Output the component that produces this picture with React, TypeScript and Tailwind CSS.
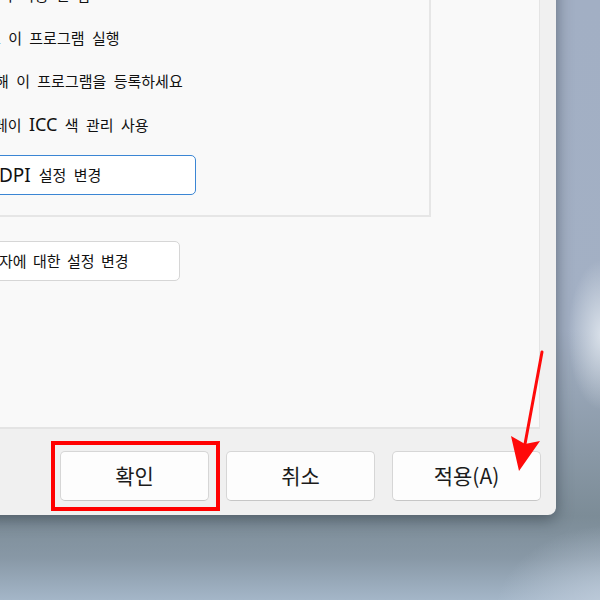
const FONT = "font-['Noto_Sans_CJK_KR','Noto_Sans',sans-serif]";

const rows = [
  { text: "적화 사용 안 함", shift: "-ml-[14px]" },
  { text: "로 이 프로그램 실행", shift: "-ml-[13px]" },
  { text: "해 이 프로그램을 등록하세요", shift: "-ml-[5px]" },
  { text: "레이 ICC 색 관리 사용", shift: "-ml-[6px]", latin: "ICC" },
];

function RowText({ text, latin }: { text: string; latin?: string }) {
  if (!latin) return <>{text}</>;
  const [a, b] = text.split(latin);
  return (
    <>
      {a}
      <span className="font-['Noto_Sans',sans-serif] text-[18px]">{latin}</span>
      {b}
    </>
  );
}

function FooterButton({ label }: { label: string }) {
  return (
    <button className="flex h-[50px] w-[149px] items-center justify-center rounded-[5px] border border-[#d6d6d6] border-b-[#c6c6c6] bg-[#fdfdfd] text-[21px] text-[#1b1b1b]">
      {label}
    </button>
  );
}

export default function App() {
  return (
    <div
      className={`relative h-[600px] w-[600px] overflow-hidden bg-[radial-gradient(ellipse_34px_75px_at_602px_335px,rgba(232,238,244,0.8),transparent),radial-gradient(ellipse_120px_90px_at_615px_615px,#c0cddc,transparent),linear-gradient(180deg,#a2afc4_0%,#a3b0c4_55%,#7c8c97_86%,#8898a6_93%,#a4b6c8_100%)] ${FONT}`}
    >
      {/* properties window, only its lower right part is in view */}
      <div className="absolute left-[-200px] top-[-60px] flex h-[575px] w-[756px] flex-col overflow-hidden rounded-lg bg-[#f0f0f0] shadow-[0_4px_16px_rgba(30,40,50,0.5)]">
        <div className="min-h-0 flex-1 pr-[16px]">
          <div className="h-full border-b-2 border-r border-[#e4e4e4] bg-[#f9f9f9] pl-[100px]">
            <div className="w-[531px] border-2 border-[#e6e6e6] pb-[20px] pl-[98px] pt-[32px] text-[15px] text-[#111] [word-spacing:4px]">
              {rows.map((r) => (
                <div key={r.text} className="flex h-[43px] items-center whitespace-nowrap">
                  <span className={r.shift}>
                    <RowText text={r.text} latin={r.latin} />
                  </span>
                </div>
              ))}
              <button className="-ml-[40px] mt-[9px] flex h-[40px] w-[236px] items-center whitespace-nowrap rounded-[5px] border-[1.5px] border-[#3b86d4] bg-white pl-[38px] text-[15px] text-[#111] [word-spacing:4px]">
                <span className="font-['Noto_Sans',sans-serif] text-[19px]">DPI</span>
                <span className="ml-[8px]">설정 변경</span>
              </button>
            </div>
            <button className="mt-[24px] flex h-[40px] w-[280px] items-center whitespace-nowrap rounded-[5px] border border-[#d6d6d6] bg-white pl-[98px] text-[15px] text-[#111] [word-spacing:3px]">
              자에 대한 설정 변경
            </button>
          </div>
        </div>
        <div className="flex h-[86px] items-start justify-end gap-[17px] pr-[15px] pt-[22px]">
          <FooterButton label="확인" />
          <FooterButton label="취소" />
          <FooterButton label="적용(A)" />
        </div>
      </div>

      {/* annotation: red box round OK and an arrow to Apply */}
      <div className="absolute left-[51px] top-[441px] h-[70px] w-[169px] border-4 border-[#ff0000]" />
      <svg className="pointer-events-none absolute inset-0" width="600" height="600" viewBox="0 0 600 600">
        <line x1="542" y1="352" x2="525" y2="444" stroke="#ff0a0a" strokeWidth="3" strokeLinecap="round" />
        <polygon points="511,436 525,444 540,441 519,471" fill="#ff0a0a" />
      </svg>
    </div>
  );
}
